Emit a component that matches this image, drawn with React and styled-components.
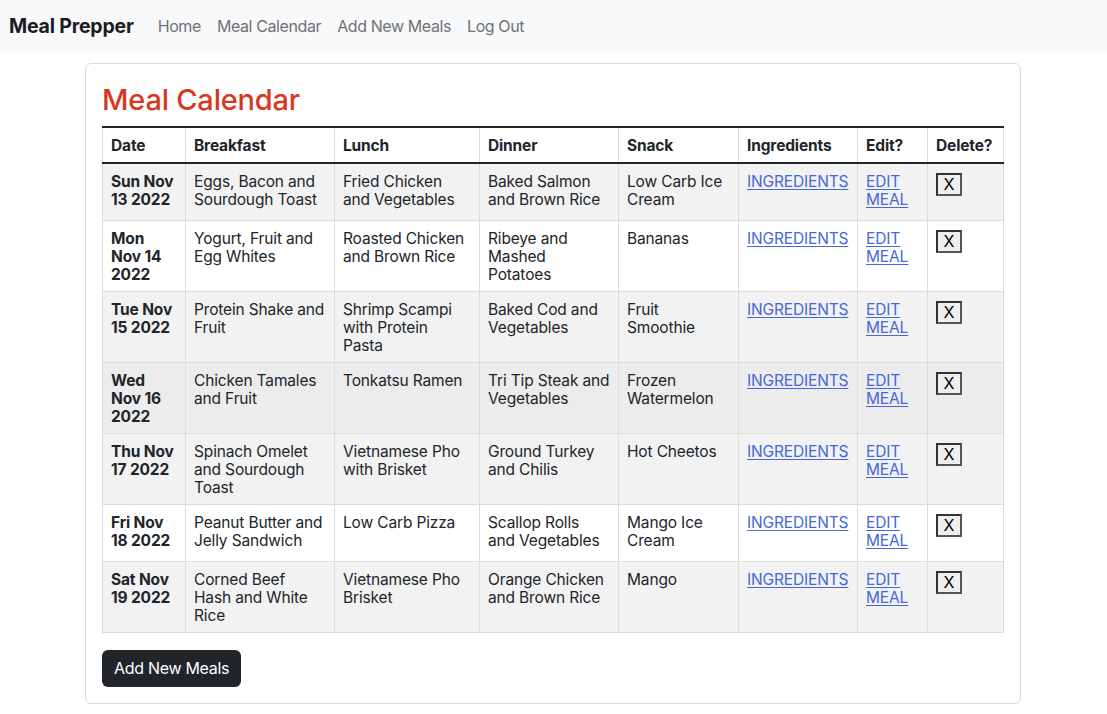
import styled, { createGlobalStyle } from 'styled-components';

const GlobalStyle = createGlobalStyle`
  body {
    margin: 0;
    font-family: Inter, "Noto Sans", "Liberation Sans", sans-serif;
    color: #212529;
    background: #fff;
  }
`;

// each cell is kept as the lines it wraps into
const meals = [
  {
    date: ['Sun Nov', '13 2022'],
    breakfast: ['Eggs, Bacon and', 'Sourdough Toast'],
    lunch: ['Fried Chicken', 'and Vegetables'],
    dinner: ['Baked Salmon', 'and Brown Rice'],
    snack: ['Low Carb Ice', 'Cream'],
  },
  {
    date: ['Mon', 'Nov 14', '2022'],
    breakfast: ['Yogurt, Fruit and', 'Egg Whites'],
    lunch: ['Roasted Chicken', 'and Brown Rice'],
    dinner: ['Ribeye and', 'Mashed', 'Potatoes'],
    snack: ['Bananas'],
  },
  {
    date: ['Tue Nov', '15 2022'],
    breakfast: ['Protein Shake and', 'Fruit'],
    lunch: ['Shrimp Scampi', 'with Protein', 'Pasta'],
    dinner: ['Baked Cod and', 'Vegetables'],
    snack: ['Fruit', 'Smoothie'],
  },
  {
    date: ['Wed', 'Nov 16', '2022'],
    breakfast: ['Chicken Tamales', 'and Fruit'],
    lunch: ['Tonkatsu Ramen'],
    dinner: ['Tri Tip Steak and', 'Vegetables'],
    snack: ['Frozen', 'Watermelon'],
  },
  {
    date: ['Thu Nov', '17 2022'],
    breakfast: ['Spinach Omelet', 'and Sourdough', 'Toast'],
    lunch: ['Vietnamese Pho', 'with Brisket'],
    dinner: ['Ground Turkey', 'and Chilis'],
    snack: ['Hot Cheetos'],
  },
  {
    date: ['Fri Nov', '18 2022'],
    breakfast: ['Peanut Butter and', 'Jelly Sandwich'],
    lunch: ['Low Carb Pizza'],
    dinner: ['Scallop Rolls', 'and Vegetables'],
    snack: ['Mango Ice', 'Cream'],
  },
  {
    date: ['Sat Nov', '19 2022'],
    breakfast: ['Corned Beef', 'Hash and White', 'Rice'],
    lunch: ['Vietnamese Pho', 'Brisket'],
    dinner: ['Orange Chicken', 'and Brown Rice'],
    snack: ['Mango'],
  },
];

const columns = [
  ['Date', 83],
  ['Breakfast', 149],
  ['Lunch', 145],
  ['Dinner', 139],
  ['Snack', 120],
  ['Ingredients', 119],
  ['Edit?', 70],
  ['Delete?', 76],
];

const Lines = ({ lines }) => lines.map(l => <Line key={l}>{l}</Line>);

export default function App() {
  return (
    <>
      <GlobalStyle />
      <Navbar>
        <Brand>Meal Prepper</Brand>
        <NavLinks>
          <NavItem href="#">Home</NavItem>
          <NavItem href="#">Meal Calendar</NavItem>
          <NavItem href="#">Add New Meals</NavItem>
          <NavItem href="#">Log Out</NavItem>
        </NavLinks>
      </Navbar>

      <Page>
        <Card>
          <Title>Meal Calendar</Title>
          <Table>
            <colgroup>
              {columns.map(([name, w]) => (
                <col key={name} style={{ width: w }} />
              ))}
            </colgroup>
            <thead>
              <tr>
                {columns.map(([name]) => (
                  <Th key={name}>{name}</Th>
                ))}
              </tr>
            </thead>
            <tbody>
              {meals.map((m, i) => (
                <Row key={m.date.join(' ')} $striped={i % 2 === 0} $hover={i === 3}>
                  <DateCell><Lines lines={m.date} /></DateCell>
                  <Td><Lines lines={m.breakfast} /></Td>
                  <Td><Lines lines={m.lunch} /></Td>
                  <Td><Lines lines={m.dinner} /></Td>
                  <Td><Lines lines={m.snack} /></Td>
                  <Td><TableLink href="#">INGREDIENTS</TableLink></Td>
                  <Td>
                    <TableLink href="#">
                      <Line>EDIT</Line>
                      <Line>MEAL</Line>
                    </TableLink>
                  </Td>
                  <Td>
                    <DeleteForm>
                      <DeleteButton type="button">X</DeleteButton>
                    </DeleteForm>
                  </Td>
                </Row>
              ))}
            </tbody>
          </Table>
          <AddButton type="button">Add New Meals</AddButton>
        </Card>
      </Page>
    </>
  );
}

const Navbar = styled.nav`
  display: flex;
  align-items: center;
  height: 52px;
  padding: 0 9px;
  background: #f8f9fa;
`;

const Brand = styled.a`
  font-size: 19.5px;
  font-weight: 700;
  color: #1c1c1e;
  margin-right: 24px;
  letter-spacing: -0.2px;
`;

const NavLinks = styled.div`
  display: flex;
  gap: 16px;
`;

const NavItem = styled.a`
  font-size: 16px;
  color: #6f7175;
  text-decoration: none;
  letter-spacing: -0.4px;
`;

const Page = styled.main`
  width: 936px;
  margin: 11px 0 0 85px;
`;

const Card = styled.section`
  border: 1px solid #d9d9d9;
  border-radius: 6px;
  padding: 19px 16px 16px;
`;

const Title = styled.h1`
  margin: 0 0 8px;
  font-size: 29px;
  font-weight: 500;
  color: #d6391f;
  line-height: 1.2;
  letter-spacing: -0.2px;
`;

const Table = styled.table`
  width: 902px;
  border-collapse: collapse;
  table-layout: fixed;
  border-top: 2px solid #212529;
  font-size: 15.5px;
  line-height: 18px;
  letter-spacing: -0.15px;
  margin-bottom: 17px;
`;

const Th = styled.th`
  text-align: left;
  font-weight: 700;
  padding: 9px 8px 7px;
  border: 1px solid #dcdcdc;
  border-top: none;
  border-bottom: 2px solid #212529;
`;

const Row = styled.tr`
  background: ${p => (p.$hover ? '#ececec' : p.$striped ? '#f2f2f2' : '#fff')};
`;

const Td = styled.td`
  vertical-align: top;
  padding: 9px 8px 7px;
  border: 1px solid #dcdcdc;
  color: #212529;
`;

const DateCell = styled(Td)`
  font-weight: 700;
`;

const Line = styled.span`
  display: block;
  white-space: nowrap;
`;

const TableLink = styled.a`
  display: inline-block;
  color: #4467dd;
  text-decoration: underline;
  text-underline-offset: 2px;

  ${Line} {
    text-decoration: underline;
    text-underline-offset: 2px;
  }
`;

const DeleteForm = styled.form`
  min-height: 40px;
  margin: 0;
`;

const DeleteButton = styled.button`
  width: 26px;
  height: 23px;
  padding: 0;
  font-family: inherit;
  font-size: 16px;
  line-height: 1;
  color: #000;
  background: #efefef;
  border: 2px solid #333;
  border-right-color: #555;
  border-bottom-color: #555;
`;

const AddButton = styled.button`
  height: 37px;
  padding: 0 12px;
  font-family: inherit;
  font-size: 16px;
  letter-spacing: -0.3px;
  color: #fff;
  background: #212529;
  border: none;
  border-radius: 6px;
`;
